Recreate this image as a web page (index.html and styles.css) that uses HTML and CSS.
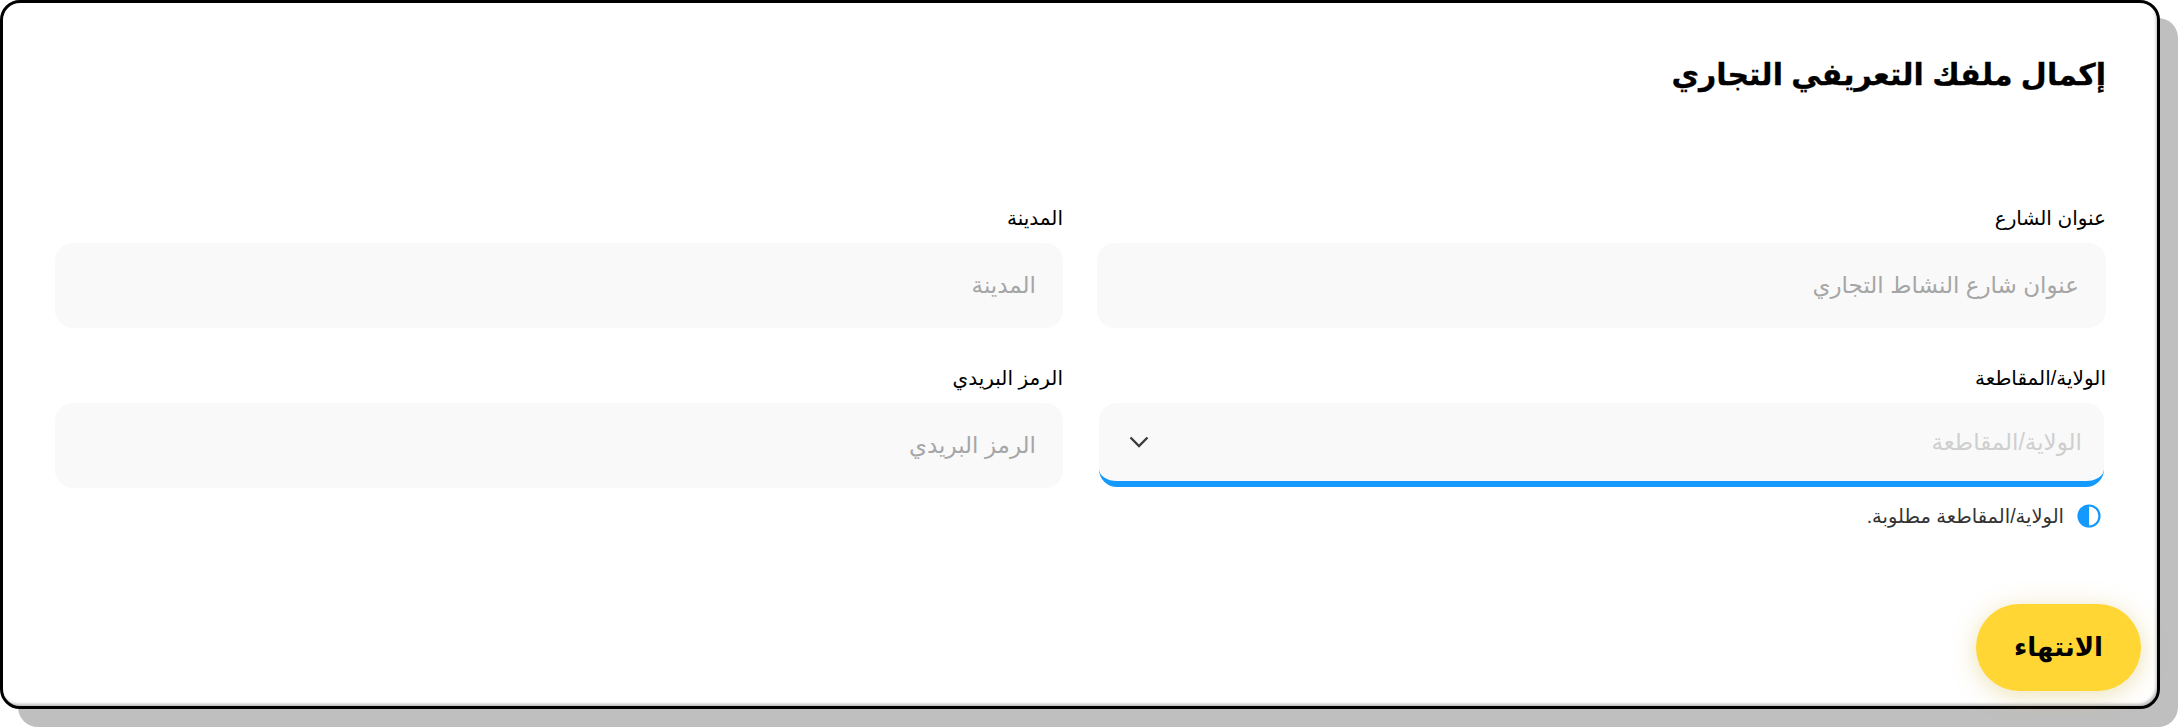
FILE: index.html
```html
<!DOCTYPE html>
<html lang="ar" dir="rtl">
<head>
<meta charset="utf-8">
<title>إكمال ملفك التعريفي التجاري</title>
<link rel="stylesheet" href="styles.css">
</head>
<body>
<main class="card">
  <h1 class="title">إكمال ملفك التعريفي التجاري</h1>
  <form class="form">
    <div class="field">
      <label class="label" for="street">عنوان الشارع</label>
      <input class="control" id="street" type="text" placeholder="عنوان شارع النشاط التجاري">
    </div>
    <div class="field">
      <label class="label" for="city">المدينة</label>
      <input class="control" id="city" type="text" placeholder="المدينة">
    </div>
    <div class="field">
      <label class="label" for="state">الولاية/المقاطعة</label>
      <div class="select" id="state">
        <span class="select-text">الولاية/المقاطعة</span>
        <svg class="chevron" viewBox="0 0 20 12" width="20" height="12" aria-hidden="true"><path d="M1.5 1.5 10 10l8.500-8.500" fill="none" stroke="#3d3d3d" stroke-width="2.400"/></svg>
      </div>
      <p class="error">
        <svg class="error-icon" viewBox="0 0 24 24" width="24" height="24" aria-hidden="true"><circle cx="12" cy="12" r="10.500" fill="#fff" stroke="#1499ff" stroke-width="2.200"/><path d="M12 1.500a10.500 10.500 0 0 0 0 21z" fill="#1499ff"/></svg>
        <span>الولاية/المقاطعة مطلوبة.</span>
      </p>
    </div>
    <div class="field">
      <label class="label" for="zip">الرمز البريدي</label>
      <input class="control" id="zip" type="text" placeholder="الرمز البريدي">
    </div>
  </form>
  <button class="finish" type="button">الانتهاء</button>
</main>
</body>
</html>
```
FILE: styles.css
```css
* { box-sizing: border-box; }
html, body { margin: 0; padding: 0; background: #fff; }
body {
  width: 2179px;
  height: 728px;
  overflow: hidden;
  font-family: "Liberation Sans", "DejaVu Sans", sans-serif;
}
.card {
  position: relative;
  width: 2160px;
  height: 709px;
  margin-right: 19px;
  padding: 51px 51px 0 52px;
  background: #fff;
  border: 3px solid #000;
  border-radius: 20px;
  box-shadow: 18px 18px 0 #bfbfbf, inset -2px -3px 3px -1px #bbb;
}
.title {
  margin: 0;
  height: 42px;
  font-size: 30px;
  line-height: 42px;
  font-weight: 700;
  color: #000;
  -webkit-text-stroke: 0.3px #000;
}
.form {
  display: grid;
  grid-template-columns: 1009px 1008px;
  column-gap: 34px;
  margin-top: 112px;
  align-items: start;
}
.field { display: flex; flex-direction: column; }
.field:nth-child(n+3) { margin-top: 40px; }
.label {
  height: 21px;
  margin-bottom: 14px;
  font-size: 20px;
  line-height: 21px;
  color: #000;
}
.control, .select {
  width: 100%;
  height: 85px;
  padding: 0 27px;
  border: 0;
  border-radius: 18px;
  background: #f9f9f9;
  font: 23px "Liberation Sans", "DejaVu Sans", sans-serif;
  outline: 0;
}
.control::placeholder { color: #a6a6a6; opacity: 1; }
.select {
  display: flex;
  align-items: center;
  justify-content: space-between;
  width: auto;
  height: 84px;
  margin: 0 2px;
  padding: 0 22px 0 30px;
  border-bottom: 6px solid #1499ff;
  color: #cfcfcf;
}
.chevron { display: block; }
.error {
  display: flex;
  align-items: center;
  gap: 13px;
  margin: 17px 5px 0 0;
  font-size: 19.500px;
  line-height: 24px;
  color: #333;
}
.error-icon { display: block; flex: none; }
.finish {
  position: absolute;
  left: 1973px;
  top: 601px;
  width: 165px;
  height: 87px;
  border: 0;
  border-radius: 44px;
  background: #ffd633;
  box-shadow: 0 4px 24px rgba(200, 170, 40, .35);
  font: 700 26px "Liberation Sans", "DejaVu Sans", sans-serif;
  color: #000;
}
```
